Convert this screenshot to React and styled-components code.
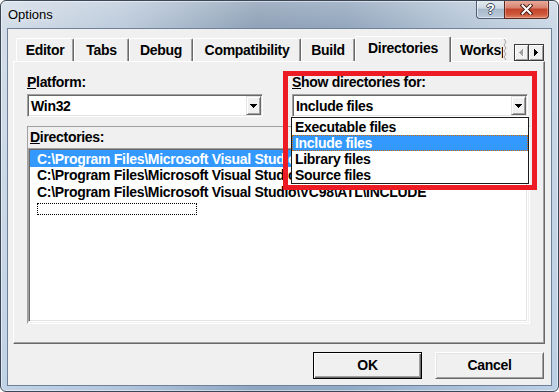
import React from "react";
import styled, { createGlobalStyle } from "styled-components";

const ui = `"Liberation Sans", Arial, sans-serif`;

const GlobalStyle = createGlobalStyle`
  html, body {
    margin: 0;
    padding: 0;
    background: #fff;
  }
`;

const Window = styled.div`
  box-sizing: border-box;
  width: 559px;
  height: 392px;
  border: 1px solid #3b4756;
  border-radius: 6px;
  overflow: hidden;
  display: flex;
  flex-direction: column;
  padding: 0 6px 5px 6px;
  background:
    linear-gradient(180deg, rgba(255,255,255,0.2) 0%, rgba(255,255,255,0) 28px, rgba(140,180,225,0.25) 100%),
    linear-gradient(90deg, #d3dde8 0%, #bdcbdb 22%, #8ea1b7 46%, #92a6bd 62%, #b4c4d6 82%, #ccd9e6 100%);
  box-shadow: inset 0 0 0 1px rgba(255,255,255,0.5);
`;

const TitleBar = styled.div`
  height: 27px;
  display: flex;
  align-items: flex-start;
`;

const Title = styled.div`
  flex: 1;
  height: 27px;
  display: flex;
  align-items: center;
  padding-left: 1px;
  font: 13px ${ui};
  color: #000;
  text-shadow: 0 0 6px rgba(255,255,255,0.8);
`;

const Caption = styled.div`
  display: flex;
  margin-top: -1px;
  margin-right: 3px;
`;

const HelpButton = styled.div`
  box-sizing: border-box;
  width: 28px;
  height: 19px;
  border: 1px solid #4d5c6e;
  border-top: none;
  border-right: none;
  border-bottom-left-radius: 4px;
  background: linear-gradient(180deg, #e6ecf2 0%, #cdd7e2 45%, #a9b9cb 52%, #bccadb 100%);
  box-shadow: inset 1px 0 rgba(255,255,255,0.6), inset 0 -1px rgba(255,255,255,0.5);
  display: flex;
  align-items: center;
  justify-content: center;
  font: bold 14px ${ui};
  color: #fff;
  text-shadow: 1px 0 #3d4a5a, -1px 0 #3d4a5a, 0 1px #3d4a5a, 0 -1px #3d4a5a;
`;

const CloseButton = styled.div`
  box-sizing: border-box;
  width: 45px;
  height: 19px;
  border: 1px solid #5a2820;
  border-top: none;
  border-bottom-right-radius: 4px;
  background: linear-gradient(180deg, #eab0a2 0%, #d98470 42%, #c4452d 52%, #cc5539 78%, #de8467 100%);
  box-shadow: inset 0 0 0 1px rgba(255,220,210,0.35);
  display: flex;
  align-items: center;
  justify-content: center;
`;

const Client = styled.div`
  flex: 1;
  border: 1px solid #6f8198;
  background: #f0f0f0;
  display: flex;
  flex-direction: column;
  padding: 7px 6px 0 5px;
  font: bold 14px ${ui};
  letter-spacing: -0.3px;
  color: #000;
`;

const TabRow = styled.div`
  height: 25px;
  display: flex;
  align-items: flex-end;
  padding-left: 3px;
`;

const Tab = styled.div`
  box-sizing: border-box;
  width: ${(p) => p.$width}px;
  height: ${(p) => (p.$selected ? 26 : 23)}px;
  margin-bottom: ${(p) => (p.$selected ? -1 : 0)}px;
  position: relative;
  z-index: ${(p) => (p.$selected ? 2 : 0)};
  background: #f0f0f0;
  border-top: 1px solid #fff;
  border-left: 1px solid #fff;
  border-right: ${(p) => (p.$clipped ? "none" : "1px solid #696969")};
  box-shadow: ${(p) => (p.$clipped ? "none" : "inset -1px 0 #a0a0a0")};
  border-top-left-radius: 2px;
  border-top-right-radius: 2px;
  display: flex;
  align-items: center;
  justify-content: ${(p) => (p.$clipped ? "flex-start" : "center")};
  padding: 0 0 ${(p) => (p.$selected ? 3 : 1)}px ${(p) => (p.$clipped ? 8 : 0)}px;
  white-space: nowrap;
  overflow: hidden;
`;

const TabText = styled.span`
  flex: 1;
  overflow: hidden;
`;

const Scroller = styled.div`
  display: flex;
  margin-left: 7px;
  margin-bottom: 0;
`;

const ScrollBtn = styled.div`
  box-sizing: border-box;
  width: 15px;
  height: 17px;
  background: #f0f0f0;
  border: 1px solid #3c3c3c;
  border-left: ${(p) => (p.$joined ? "none" : "1px solid #3c3c3c")};
  box-shadow: inset 1px 1px #fff, inset -1px -1px #a0a0a0;
  display: flex;
  align-items: center;
  justify-content: center;
`;

const Panel = styled.div`
  box-sizing: border-box;
  height: 283px;
  border: 1px solid;
  border-color: #fff #696969 #696969 #fff;
  box-shadow: inset -1px -1px #a0a0a0;
  padding: 12px 13px 0 13px;
  display: flex;
  flex-direction: column;
`;

const TopGrid = styled.div`
  display: grid;
  grid-template-columns: 236px 236px;
  column-gap: 29px;
`;

const Field = styled.div`
  position: relative;
  display: flex;
  flex-direction: column;
  gap: 4px;
`;

const Label = styled.div`
  height: 16px;
  line-height: 16px;
  white-space: nowrap;
`;

const Combo = styled.div`
  box-sizing: border-box;
  height: 23px;
  border: 1px solid;
  border-color: #a0a0a0 #fff #fff #a0a0a0;
  box-shadow: inset 1px 1px #696969, inset -1px -1px #e3e3e3;
  background: #fff;
  display: flex;
  align-items: center;
  padding: 1px 1px 1px 3px;
`;

const ComboText = styled.span`
  flex: 1;
  white-space: nowrap;
`;

const DropButton = styled.div`
  box-sizing: border-box;
  width: 15px;
  height: 19px;
  background: #f0f0f0;
  border: 1px solid;
  border-color: #e3e3e3 #696969 #696969 #e3e3e3;
  box-shadow: inset 1px 1px #fff, inset -1px -1px #a0a0a0;
  display: flex;
  align-items: center;
  justify-content: center;
`;

const DropList = styled.div`
  position: absolute;
  top: 43px;
  left: -1px;
  width: 238px;
  height: 67px;
  box-sizing: border-box;
  border: 1px solid #1a1a1a;
  background: #fff;
  padding-top: 1px;
  z-index: 3;
`;

const DropItem = styled.div`
  box-sizing: border-box;
  height: 16px;
  line-height: 16px;
  padding-left: 3px;
  white-space: nowrap;
  background: ${(p) => (p.$active ? "#3399ff" : "transparent")};
  color: ${(p) => (p.$active ? "#fff" : "#000")};
  outline: ${(p) => (p.$active ? "1px dotted #cc6600" : "none")};
  outline-offset: -1px;
`;

const Annotation = styled.div`
  position: absolute;
  left: -9px;
  top: -3px;
  width: 254px;
  height: 119px;
  box-sizing: border-box;
  border: 5px solid #ed1c24;
  z-index: 4;
  pointer-events: none;
`;

const DirBox = styled.div`
  box-sizing: border-box;
  width: 503px;
  height: 198px;
  margin-top: 9px;
  border: 1px solid;
  border-color: #a0a0a0 #fff #fff #a0a0a0;
  padding: 2px 1px 1px 0;
  display: flex;
  flex-direction: column;
`;

const DirLabel = styled.div`
  height: 16px;
  line-height: 16px;
  padding-left: 2px;
  margin-bottom: 3px;
`;

const ListBox = styled.div`
  box-sizing: border-box;
  flex: 1;
  border: 1px solid;
  border-color: #a0a0a0 #fff #fff #a0a0a0;
  box-shadow: inset 1px 1px #696969, inset -1px -1px #e3e3e3;
  background: #fff;
  padding: 1px;
  overflow: hidden;
`;

const ListRow = styled.div`
  height: 16.667px;
  line-height: 16.667px;
  padding: 0 0 0 7px;
  display: flex;
  align-items: center;
  white-space: nowrap;
  overflow: hidden;
  background: ${(p) => (p.$selected ? "#3399ff" : "transparent")};
  color: ${(p) => (p.$selected ? "#fff" : "#000")};
`;

const RowText = styled.span`
  padding-top: 1px;
`;

const FocusRect = styled.div`
  box-sizing: border-box;
  width: 160px;
  height: 12px;
  margin-top: 2px;
  border: 1px dotted #000;
`;

const ButtonRow = styled.div`
  display: flex;
  justify-content: flex-end;
  gap: 13px;
  margin-top: 8px;
  padding-right: 1px;
`;

const DialogButton = styled.div`
  box-sizing: border-box;
  width: 109px;
  height: 27px;
  background: #f0f0f0;
  border: 1px solid;
  border-color: ${(p) => (p.$default ? "#000" : "#fff #696969 #696969 #fff")};
  box-shadow: ${(p) =>
    p.$default
      ? "inset 1px 1px #fff, inset -1px -1px #696969, inset -2px -2px #a0a0a0"
      : "inset 1px 1px #e3e3e3, inset -1px -1px #a0a0a0"};
  display: flex;
  align-items: center;
  justify-content: center;
  padding-bottom: 1px;
`;

function DownArrow() {
  return (
    <svg width="7" height="4" viewBox="0 0 7 4" shapeRendering="crispEdges">
      <polygon points="0,0 7,0 3.5,4" fill="#000" />
    </svg>
  );
}

function SideArrow({ dir, disabled }) {
  const pts = dir === "left" ? "4,0 4,7 0,3.5" : "0,0 0,7 4,3.5";
  return (
    <svg width="5" height="8" viewBox="0 0 5 8" shapeRendering="crispEdges">
      {disabled && <polygon points={pts} fill="#fff" transform="translate(1,1)" />}
      <polygon points={pts} fill={disabled ? "#a0a0a0" : "#000"} />
    </svg>
  );
}

function CloseGlyph() {
  return (
    <svg width="13" height="11" viewBox="0 0 13 11">
      <path d="M2.5 1.5 L10.5 9.5 M10.5 1.5 L2.5 9.5" stroke="#4a1a12" strokeWidth="4" strokeLinecap="square" />
      <path d="M2.5 1.5 L10.5 9.5 M10.5 1.5 L2.5 9.5" stroke="#fff" strokeWidth="2" strokeLinecap="square" />
    </svg>
  );
}

function Tear() {
  return (
    <svg width="4" height="21" viewBox="0 0 4 21">
      <polyline points="1,0 3,3 1,6 3,9 1,12 3,15 1,18 3,21" fill="none" stroke="#a0a0a0" strokeWidth="1" />
    </svg>
  );
}

const tabs = [
  { name: "Editor", width: 58 },
  { name: "Tabs", width: 55 },
  { name: "Debug", width: 64 },
  { name: "Compatibility", width: 108 },
  { name: "Build", width: 54 },
  { name: "Directories", width: 96, selected: true },
];

const dirs = [
  "C:\\Program Files\\Microsoft Visual Studio\\VC98\\INCLUDE",
  "C:\\Program Files\\Microsoft Visual Studio\\VC98\\MFC\\INCLUDE",
  "C:\\Program Files\\Microsoft Visual Studio\\VC98\\ATL\\INCLUDE",
];

const kinds = ["Executable files", "Include files", "Library files", "Source files"];

export default function App() {
  return (
    <>
      <GlobalStyle />
      <Window>
        <TitleBar>
          <Title>Options</Title>
          <Caption>
            <HelpButton>?</HelpButton>
            <CloseButton>
              <CloseGlyph />
            </CloseButton>
          </Caption>
        </TitleBar>
        <Client>
          <TabRow>
            {tabs.map((t) => (
              <Tab key={t.name} $width={t.width} $selected={t.selected}>
                {t.name}
              </Tab>
            ))}
            <Tab $width={56} $clipped>
              <TabText>Workspace</TabText>
              <Tear />
            </Tab>
            <Scroller>
              <ScrollBtn>
                <SideArrow dir="left" disabled />
              </ScrollBtn>
              <ScrollBtn $joined>
                <SideArrow dir="right" />
              </ScrollBtn>
            </Scroller>
          </TabRow>
          <Panel>
            <TopGrid>
              <Field>
                <Label>
                  <u>P</u>latform:
                </Label>
                <Combo>
                  <ComboText>Win32</ComboText>
                  <DropButton>
                    <DownArrow />
                  </DropButton>
                </Combo>
              </Field>
              <Field>
                <Label>
                  <u>S</u>how directories for:
                </Label>
                <Combo>
                  <ComboText>Include files</ComboText>
                  <DropButton>
                    <DownArrow />
                  </DropButton>
                </Combo>
                <DropList>
                  {kinds.map((k) => (
                    <DropItem key={k} $active={k === "Include files"}>
                      {k}
                    </DropItem>
                  ))}
                </DropList>
                <Annotation />
              </Field>
            </TopGrid>
            <DirBox>
              <DirLabel>
                <u>D</u>irectories:
              </DirLabel>
              <ListBox>
                {dirs.map((d, i) => (
                  <ListRow key={d} $selected={i === 0}>
                    <RowText>{d}</RowText>
                  </ListRow>
                ))}
                <ListRow>
                  <FocusRect />
                </ListRow>
              </ListBox>
            </DirBox>
          </Panel>
          <ButtonRow>
            <DialogButton $default>OK</DialogButton>
            <DialogButton>Cancel</DialogButton>
          </ButtonRow>
        </Client>
      </Window>
    </>
  );
}
